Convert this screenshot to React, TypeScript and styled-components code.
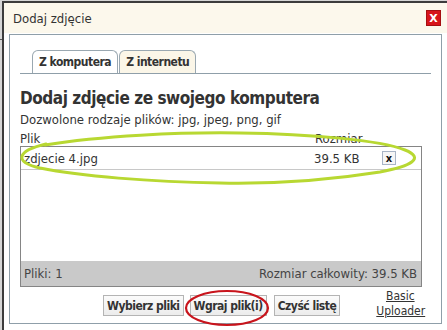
import React from "react";
import styled, { createGlobalStyle } from "styled-components";

const FONT = `Tahoma, "DejaVu Sans Condensed", "DejaVu Sans", sans-serif`;

const GlobalStyle = createGlobalStyle`
  html, body { margin: 0; padding: 0; }
  body {
    width: 447px;
    height: 330px;
    overflow: hidden;
    font-family: ${FONT};
    background: linear-gradient(to bottom, #d6d6d6 0 39px, #5a5a5a 39px 40px, #d6d6d6 40px);
  }
`;

const Page = styled.div`
  position: relative;
  display: flex;
  width: 447px;
  padding-top: 1px;
  height: 330px;
  box-sizing: border-box;
`;

const Dialog = styled.div`
  flex: 1;
  min-width: 0;
  overflow: hidden;
  margin-left: 2px;
  border-top: 2px solid #3c3c3c;
  border-left: 2px solid #3c3c3c;
  background: #fff;
  display: flex;
  flex-direction: column;
`;

const TitleBar = styled.div`
  height: 30px;
  background: #fcf8ec;
  display: flex;
  align-items: center;
  justify-content: space-between;
  padding: 0 6px 0 9px;
`;

const Title = styled.span`
  font-size: 13px;
  color: #333;
`;

const CloseBtn = styled.span`
  width: 13px;
  height: 14px;
  background: #d7151b;
  border: 1px solid #a50f12;
  color: #fff;
  font-weight: bold;
  font-size: 11px;
  font-family: "DejaVu Sans", sans-serif;
  display: flex;
  align-items: center;
  justify-content: center;
`;

const Body = styled.div`
  flex: 1;
  min-width: 0;
  padding: 1px 5px 6px 5px;
  display: flex;
`;

const Panel = styled.div`
  flex: 1;
  min-width: 0;
  border: 1px solid #8f9fa9;
  padding: 15px 10px 0 10px;
  display: flex;
  flex-direction: column;
`;

const Tabs = styled.div`
  display: flex;
  gap: 1px;
  padding-left: 12px;
  border-bottom: 1px solid #8f9fa9;
`;

const Tab = styled.div<{ $active?: boolean }>`
  height: 22px;
  display: flex;
  align-items: center;
  padding: 0 6px;
  border: 1px solid #9aa8b1;
  border-bottom: none;
  border-radius: 6px 6px 0 0;
  background: ${(p) => (p.$active ? "#ffffff" : "#fbf6e8")};
  font-size: 12px;
  letter-spacing: -0.5px;
  font-weight: bold;
  color: #333;
`;

const Heading = styled.h1`
  margin: 13px 0 0 0;
  font-size: 17px;
  letter-spacing: -0.45px;
  line-height: 22px;
  font-weight: bold;
  color: #333;
`;

const Sub = styled.div`
  margin-top: 3px;
  font-size: 13px;
  line-height: 16px;
  color: #333;
`;

const ColHeader = styled.div`
  display: grid;
  grid-template-columns: 1fr 70px 37px;
  margin-right: 9px;
  font-size: 13px;
  line-height: 15px;
  color: #333;
  margin-top: 3px;
`;

const List = styled.div`
  border: 1px solid #858585;
  margin-right: 9px;
  height: 141px;
  box-sizing: border-box;
  display: flex;
  flex-direction: column;
`;

const Rows = styled.div`
  flex: 1;
`;

const Row = styled.div`
  display: grid;
  grid-template-columns: 1fr 70px 37px;
  align-items: center;
  height: 22px;
  padding-left: 3px;
  border-bottom: 1px solid #c8c8c8;
  font-size: 13px;
  color: #333;
`;

const RemoveBtn = styled.span`
  width: 12px;
  height: 12px;
  margin-left: -2px;
  border: 1px solid #a8b4c6;
  background: #f6f6f6;
  font-size: 11px;
  font-weight: bold;
  color: #111;
  display: flex;
  align-items: center;
  justify-content: center;
  line-height: 1;
`;

const Footer = styled.div`
  height: 25px;
  background: #c9c9c9;
  display: flex;
  align-items: center;
  justify-content: space-between;
  padding: 0 4px 0 3px;
  font-size: 13px;
  color: #444;
`;

const Actions = styled.div`
  display: flex;
  align-items: flex-end;
  margin-top: 2px;
  padding-left: 83px;
`;

const Button = styled.button<{ $gap?: number }>`
  height: 21px;
  margin-left: ${(p) => p.$gap ?? 0}px;
  margin-bottom: 3px;
  padding: 0 3px;
  white-space: nowrap;
  border: 1px solid #b4b4b4;
  background: linear-gradient(#fbfbfb, #ececec);
  font-family: ${FONT};
  font-size: 12px;
  letter-spacing: -0.5px;
  font-weight: bold;
  color: #333;
`;

const LinkBox = styled.a`
  margin-left: 36px;
  width: 48px;
  text-align: center;
  font-size: 12px;
  line-height: 15px;
  color: #333;
  text-decoration: underline;
`;

const Overlay = styled.svg`
  position: absolute;
  left: 0;
  top: 0;
  pointer-events: none;
`;

export default function App() {
  return (
    <>
      <GlobalStyle />
      <Page>
        <Dialog>
          <TitleBar>
            <Title>Dodaj zdjęcie</Title>
            <CloseBtn>X</CloseBtn>
          </TitleBar>
          <Body>
            <Panel>
              <Tabs>
                <Tab $active>Z komputera</Tab>
                <Tab>Z internetu</Tab>
              </Tabs>
              <Heading>Dodaj zdjęcie ze swojego komputera</Heading>
              <Sub>Dozwolone rodzaje plików: jpg, jpeg, png, gif</Sub>
              <ColHeader>
                <span>Plik</span>
                <span>Rozmiar</span>
                <span />
              </ColHeader>
              <List>
                <Rows>
                  <Row>
                    <span>zdjecie 4.jpg</span>
                    <span>39.5 KB</span>
                    <RemoveBtn>x</RemoveBtn>
                  </Row>
                </Rows>
                <Footer>
                  <span>Pliki: 1</span>
                  <span>Rozmiar całkowity: 39.5 KB</span>
                </Footer>
              </List>
              <Actions>
                <Button>Wybierz pliki</Button>
                <Button $gap={6}>Wgraj plik(i)</Button>
                <Button $gap={7}>Czyść listę</Button>
                <LinkBox>Basic Uploader</LinkBox>
              </Actions>
            </Panel>
          </Body>
        </Dialog>
        <Overlay width="447" height="330" viewBox="0 0 447 330">
          <path
            d="M 45 145 C 100 136 180 132 240 133 C 310 134 380 140 405 150 C 425 158 412 166 380 172 C 330 180 270 184 220 183 C 150 182 80 176 40 168 C 14 162 16 151 46 144"
            fill="none"
            stroke="#b8d832"
            strokeWidth="3"
            strokeLinecap="round"
          />
          <ellipse cx="227" cy="308" rx="41" ry="17" fill="none" stroke="#c8141c" strokeWidth="2.2" />
        </Overlay>
      </Page>
    </>
  );
}
